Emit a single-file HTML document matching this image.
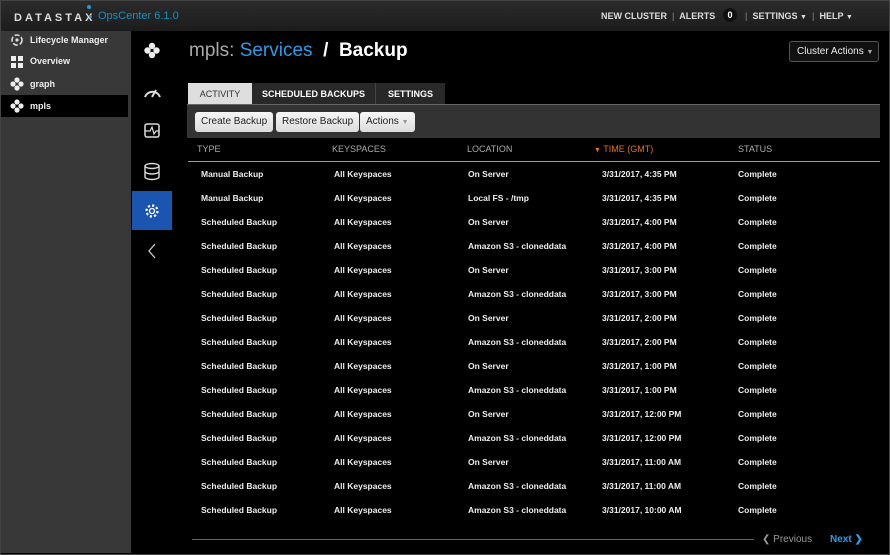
<!DOCTYPE html>
<html><head><style>
*{margin:0;padding:0;box-sizing:border-box}
body{width:890px;height:555px;background:#000;font-family:"Liberation Sans",Arial,sans-serif;position:relative;overflow:hidden;color:#fff}
.hdr{position:absolute;left:0;top:0;width:890px;height:31px;background:linear-gradient(#2c2c2c,#1c1c1c)}
.abs{position:absolute;white-space:nowrap}
.side{position:absolute;left:0;top:31px;width:131px;height:522px;background:#383838}
.si{position:absolute;left:0;width:128px;height:22px;font-size:9px;font-weight:bold;color:#eee;line-height:22px;padding-left:30px}
.rail{position:absolute;left:132px;top:31px;width:40px;height:524px;background:#000}
.tab{position:absolute;top:83px;height:21px;font-size:9px;font-weight:bold;line-height:22px;text-align:center}
.btn{position:absolute;top:112px;height:20px;background:linear-gradient(#f6f6f6,#dcdcdc);border-radius:3px;color:#222;font-size:10px;line-height:20px;padding:0 6px}
.th{position:absolute;top:144px;font-size:9px;color:#aaa}
.r{position:absolute;font-size:8.5px;font-weight:bold;color:#eee}
</style></head><body>
<div class="hdr"></div>
<div class="abs" style="left:14px;top:12px;font-size:11px;letter-spacing:3px;color:#ddd;font-weight:bold">DATASTAX</div>
<div class="abs" style="left:87px;top:5px;width:4px;height:4px;border-radius:2px;background:#1e9ad6"></div>
<div class="abs" style="left:89px;top:15px;width:3px;height:3px;border-radius:2px;background:#1e9ad6"></div>
<div class="abs" style="left:98px;top:10px;font-size:11px;color:#1a8fbf">OpsCenter 6.1.0</div>
<div class="abs" style="left:601px;top:11px;font-size:9px;color:#ddd;font-weight:bold">NEW CLUSTER &nbsp;<span style="color:#666">|</span>&nbsp; ALERTS</div>
<div class="abs" style="left:723px;top:8px;width:14px;height:14px;border-radius:7px;background:#111;font-size:9px;font-weight:bold;text-align:center;line-height:14px">0</div>
<div class="abs" style="left:745px;top:11px;font-size:9px;color:#ddd;font-weight:bold"><span style="color:#666">|</span>&nbsp; SETTINGS <span style="font-size:7px">▼</span> &nbsp;<span style="color:#666">|</span>&nbsp; HELP <span style="font-size:7px">▼</span></div>
<div class="side">
<div class="si" style="top:-2px">Lifecycle Manager</div>
<div class="si" style="top:19px">Overview</div>
<div class="si" style="top:42px">graph</div>
<div class="si" style="top:64px;background:#000">mpls</div>
</div>
<svg class="abs" style="left:8px;top:32px" width="20" height="90" viewBox="0 0 20 90">
<circle cx="9" cy="8" r="5" fill="none" stroke="#ddd" stroke-width="1.6" stroke-dasharray="5 2"/><circle cx="9" cy="8" r="1.6" fill="#ddd"/>
<rect x="3" y="24" width="5" height="5" fill="#eee"/><rect x="10" y="24" width="5" height="5" fill="#eee"/><rect x="3" y="31" width="5" height="5" fill="#eee"/><rect x="10" y="31" width="5" height="5" fill="#eee"/>
<g fill="#eee"><circle cx="9" cy="48" r="2.6"/><circle cx="9" cy="56" r="2.6"/><circle cx="5" cy="52" r="2.6"/><circle cx="13" cy="52" r="2.6"/></g>
<g fill="#eee"><circle cx="9" cy="70" r="2.6"/><circle cx="9" cy="78" r="2.6"/><circle cx="5" cy="74" r="2.6"/><circle cx="13" cy="74" r="2.6"/></g>
</svg>
<div class="rail"></div>
<div class="abs" style="left:132px;top:191px;width:40px;height:39px;background:#1a55b0"></div>
<svg class="abs" style="left:132px;top:31px" width="40" height="235" viewBox="0 0 40 235">
<g fill="#eee"><circle cx="20" cy="15" r="3.2"/><circle cx="20" cy="24" r="3.2"/><circle cx="15.5" cy="19.5" r="3.2"/><circle cx="24.5" cy="19.5" r="3.2"/></g>
<path d="M13 66 A8 8 0 0 1 28 66" fill="none" stroke="#ddd" stroke-width="2"/><path d="M20 66 L24 59" stroke="#ddd" stroke-width="2"/>
<rect x="13" y="93" width="14" height="13" rx="2" fill="none" stroke="#ddd" stroke-width="1.5"/><path d="M13 100 H18 L20 96 L22 103 L24 100 H27" fill="none" stroke="#ddd" stroke-width="1.2"/>
<ellipse cx="20" cy="135" rx="7" ry="2.5" fill="none" stroke="#ddd" stroke-width="1.4"/><path d="M13 135 V146 A7 2.5 0 0 0 27 146 V135 M13 140.5 A7 2.5 0 0 0 27 140.5" fill="none" stroke="#ddd" stroke-width="1.4"/>
<circle cx="20" cy="180" r="2.5" fill="none" stroke="#fff" stroke-width="1.3"/><circle cx="20" cy="180" r="5.5" fill="none" stroke="#fff" stroke-width="2.2" stroke-dasharray="2.2 2.1"/>
<path d="M23 213 L17 220 L23 227" fill="none" stroke="#ccc" stroke-width="1.3"/>
</svg>
<div class="abs" style="left:189px;top:40px;font-size:19px;color:#aaa">mpls: <span style="color:#2b9ce8">Services</span> <span style="color:#fff;font-weight:bold">&nbsp;/&nbsp; Backup</span></div>
<div class="abs" style="left:789px;top:41px;width:90px;height:21px;border:1px solid #555;border-radius:3px;background:#111;font-size:10px;line-height:19px;padding-left:7px;color:#eee">Cluster Actions <span style="font-size:7px;color:#aaa">▼</span></div>
<div class="tab" style="left:188px;width:64px;background:#dedede;color:#333;font-weight:normal">ACTIVITY</div>
<div class="tab" style="left:252px;width:124px;background:#282828;border-right:1px solid #444">SCHEDULED BACKUPS</div>
<div class="tab" style="left:376px;width:69px;background:#282828">SETTINGS</div>
<div class="abs" style="left:187px;top:104px;width:693px;height:34px;background:#333;border-top:1px solid #666"></div>
<div class="btn" style="left:195px">Create Backup</div>
<div class="btn" style="left:276px">Restore Backup</div>
<div class="btn" style="left:360px">Actions <span style="font-size:7px;color:#999">▼</span></div>
<div class="th" style="left:197px">TYPE</div>
<div class="th" style="left:332px">KEYSPACES</div>
<div class="th" style="left:467px">LOCATION</div>
<div class="th" style="left:594px;color:#e8700e"><span style="font-size:7px">▼</span> TIME (GMT)</div>
<div class="th" style="left:738px">STATUS</div>
<div class="abs" style="left:188px;top:161px;width:692px;height:1px;background:#999"></div>
<div id="rows"></div>
<div class="abs" style="left:192px;top:539px;width:562px;height:1px;background:#666"></div>
<div class="abs" style="left:762px;top:534px;font-size:10px;color:#999">❮ Previous</div>
<div class="abs" style="left:830px;top:534px;font-size:10px;color:#2b9ce8;font-weight:bold">Next ❯</div>
<div class="abs" style="left:0;top:0;width:890px;height:555px;border:1px solid #444;pointer-events:none"></div>
<script>
var d=[["Manual Backup","On Server","4:35 PM"],["Manual Backup","Local FS - /tmp","4:35 PM"],["Scheduled Backup","On Server","4:00 PM"],["Scheduled Backup","Amazon S3 - cloneddata","4:00 PM"],["Scheduled Backup","On Server","3:00 PM"],["Scheduled Backup","Amazon S3 - cloneddata","3:00 PM"],["Scheduled Backup","On Server","2:00 PM"],["Scheduled Backup","Amazon S3 - cloneddata","2:00 PM"],["Scheduled Backup","On Server","1:00 PM"],["Scheduled Backup","Amazon S3 - cloneddata","1:00 PM"],["Scheduled Backup","On Server","12:00 PM"],["Scheduled Backup","Amazon S3 - cloneddata","12:00 PM"],["Scheduled Backup","On Server","11:00 AM"],["Scheduled Backup","Amazon S3 - cloneddata","11:00 AM"],["Scheduled Backup","Amazon S3 - cloneddata","10:00 AM"]];
var h="";d.forEach(function(r,i){var t=169+i*24;h+='<div class="r" style="left:201px;top:'+t+'px">'+r[0]+'</div><div class="r" style="left:334px;top:'+t+'px">All Keyspaces</div><div class="r" style="left:468px;top:'+t+'px">'+r[1]+'</div><div class="r" style="left:602px;top:'+t+'px">3/31/2017, '+r[2]+'</div><div class="r" style="left:738px;top:'+t+'px">Complete</div>';});
document.getElementById("rows").innerHTML=h;
</script>
</body></html>
